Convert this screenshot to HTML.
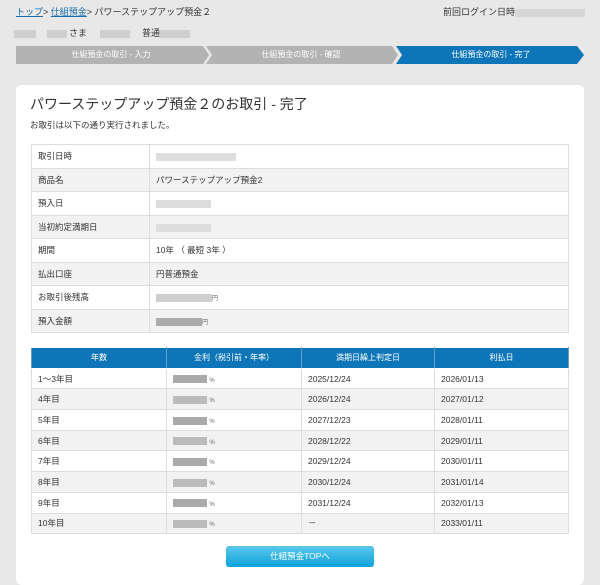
<!DOCTYPE html>
<html><head><meta charset="utf-8"><style>
*{box-sizing:border-box;margin:0;padding:0}
body{width:600px;height:575px;background:#e8e8e8;font-family:"Liberation Sans","Noto Sans CJK JP",sans-serif;color:#333;font-size:9px;position:relative;overflow:hidden}
.a{position:absolute;white-space:nowrap}
.blur{display:inline-block;background:#cfcfcf;height:8px;vertical-align:middle}
.bc a{color:#1a6fb0;text-decoration:underline}
.step{position:absolute;top:46px;height:18px;color:#fff;font-size:8px;line-height:18px;text-align:center}
.card{left:16px;top:85px;width:568px;height:500px;background:#fff;border-radius:6px}
table{border-collapse:collapse;position:absolute;left:31px;width:538px;font-size:8.5px}
td,th{border:1px solid #ddd;padding:0 6px;font-weight:normal;text-align:left}
.t1 tr{height:23.5px}
.t1 td:first-child{width:118px}
.t1 tr:nth-child(even){background:#f2f2f2}
.t2 th{background:#0e76b8;color:#fff;text-align:center;height:19px;border-color:#fff #6aa0c8;font-size:8px}
.t2 tr{height:20.7px}
.t2 tr:nth-child(odd) td{background:#f2f2f2}
.pct{font-size:6px;color:#666}
</style></head><body>
<div class="a bc" style="left:16px;top:5px"><a>トップ</a>&gt; <a>仕組預金</a>&gt; パワーステップアップ預金２</div>
<div class="a" style="left:443px;top:5px">前回ログイン日時<span class="blur" style="width:70px;background:#d6d6d6"></span></div>
<div class="a" style="left:14px;top:26px"><span class="blur" style="width:22px"></span> <span class="blur" style="width:20px;margin-left:8px"></span> さま <span class="blur" style="width:30px;margin-left:10px"></span> <span style="margin-left:10px">普通</span><span class="blur" style="width:30px"></span></div>
<svg class="a" style="left:0;top:46px" width="600" height="18">
<polygon points="16,0 203,0 209,9 203,18 16,18" fill="#b3b3b3"/>
<polygon points="206,0 392,0 398,9 392,18 206,18 212,9" fill="#b3b3b3"/>
<polygon points="396,0 577,0 584,9 577,18 396,18 402,9" fill="#0e76b8"/>
</svg>
<div class="step" style="left:16px;width:190px">仕組預金の取引 - 入力</div>
<div class="step" style="left:208px;width:186px">仕組預金の取引 - 確認</div>
<div class="step" style="left:398px;width:186px">仕組預金の取引 - 完了</div>
<div class="a card"></div>
<div class="a" style="left:30px;top:94px;font-size:14px;color:#333">パワーステップアップ預金２のお取引 - 完了</div>
<div class="a" style="left:30px;top:119px;font-size:8.5px">お取引は以下の通り実行されました。</div>
<table class="t1" style="top:144px">
<tr><td>取引日時</td><td><span class="blur" style="width:80px;background:#ddd"></span></td></tr>
<tr><td>商品名</td><td>パワーステップアップ預金2</td></tr>
<tr><td>預入日</td><td><span class="blur" style="width:55px;background:#ddd"></span></td></tr>
<tr><td>当初約定満期日</td><td><span class="blur" style="width:55px;background:#ddd"></span></td></tr>
<tr><td>期間</td><td>10年 （ 最短 3年 ）</td></tr>
<tr><td>払出口座</td><td>円普通預金</td></tr>
<tr><td>お取引後残高</td><td><span class="blur" style="width:56px"></span><span class="pct">円</span></td></tr>
<tr><td>預入金額</td><td><span class="blur" style="width:46px;background:#aaa"></span><span class="pct">円</span></td></tr>
</table>
<table class="t2" style="top:347px">
<tr><th style="width:135px">年数</th><th style="width:135px">金利（税引前・年率）</th><th style="width:133px">満期日繰上判定日</th><th>利払日</th></tr>
<tr><td>1～3年目</td><td><span class="blur" style="width:34px;background:#aaa"></span> <span class="pct">%</span></td><td>2025/12/24</td><td>2026/01/13</td></tr>
<tr><td>4年目</td><td><span class="blur" style="width:34px;background:#bbb"></span> <span class="pct">%</span></td><td>2026/12/24</td><td>2027/01/12</td></tr>
<tr><td>5年目</td><td><span class="blur" style="width:34px;background:#aaa"></span> <span class="pct">%</span></td><td>2027/12/23</td><td>2028/01/11</td></tr>
<tr><td>6年目</td><td><span class="blur" style="width:34px;background:#bbb"></span> <span class="pct">%</span></td><td>2028/12/22</td><td>2029/01/11</td></tr>
<tr><td>7年目</td><td><span class="blur" style="width:34px;background:#aaa"></span> <span class="pct">%</span></td><td>2029/12/24</td><td>2030/01/11</td></tr>
<tr><td>8年目</td><td><span class="blur" style="width:34px;background:#bbb"></span> <span class="pct">%</span></td><td>2030/12/24</td><td>2031/01/14</td></tr>
<tr><td>9年目</td><td><span class="blur" style="width:34px;background:#aaa"></span> <span class="pct">%</span></td><td>2031/12/24</td><td>2032/01/13</td></tr>
<tr><td>10年目</td><td><span class="blur" style="width:34px;background:#bbb"></span> <span class="pct">%</span></td><td>－</td><td>2033/01/11</td></tr>
</table>
<div class="a" style="left:226px;top:546px;width:148px;height:21px;border-radius:3px;background:linear-gradient(#5cc8ec,#0aa3d8);color:#fff;text-align:center;line-height:21px;font-size:8.5px">仕組預金TOPへ</div>
</body></html>
